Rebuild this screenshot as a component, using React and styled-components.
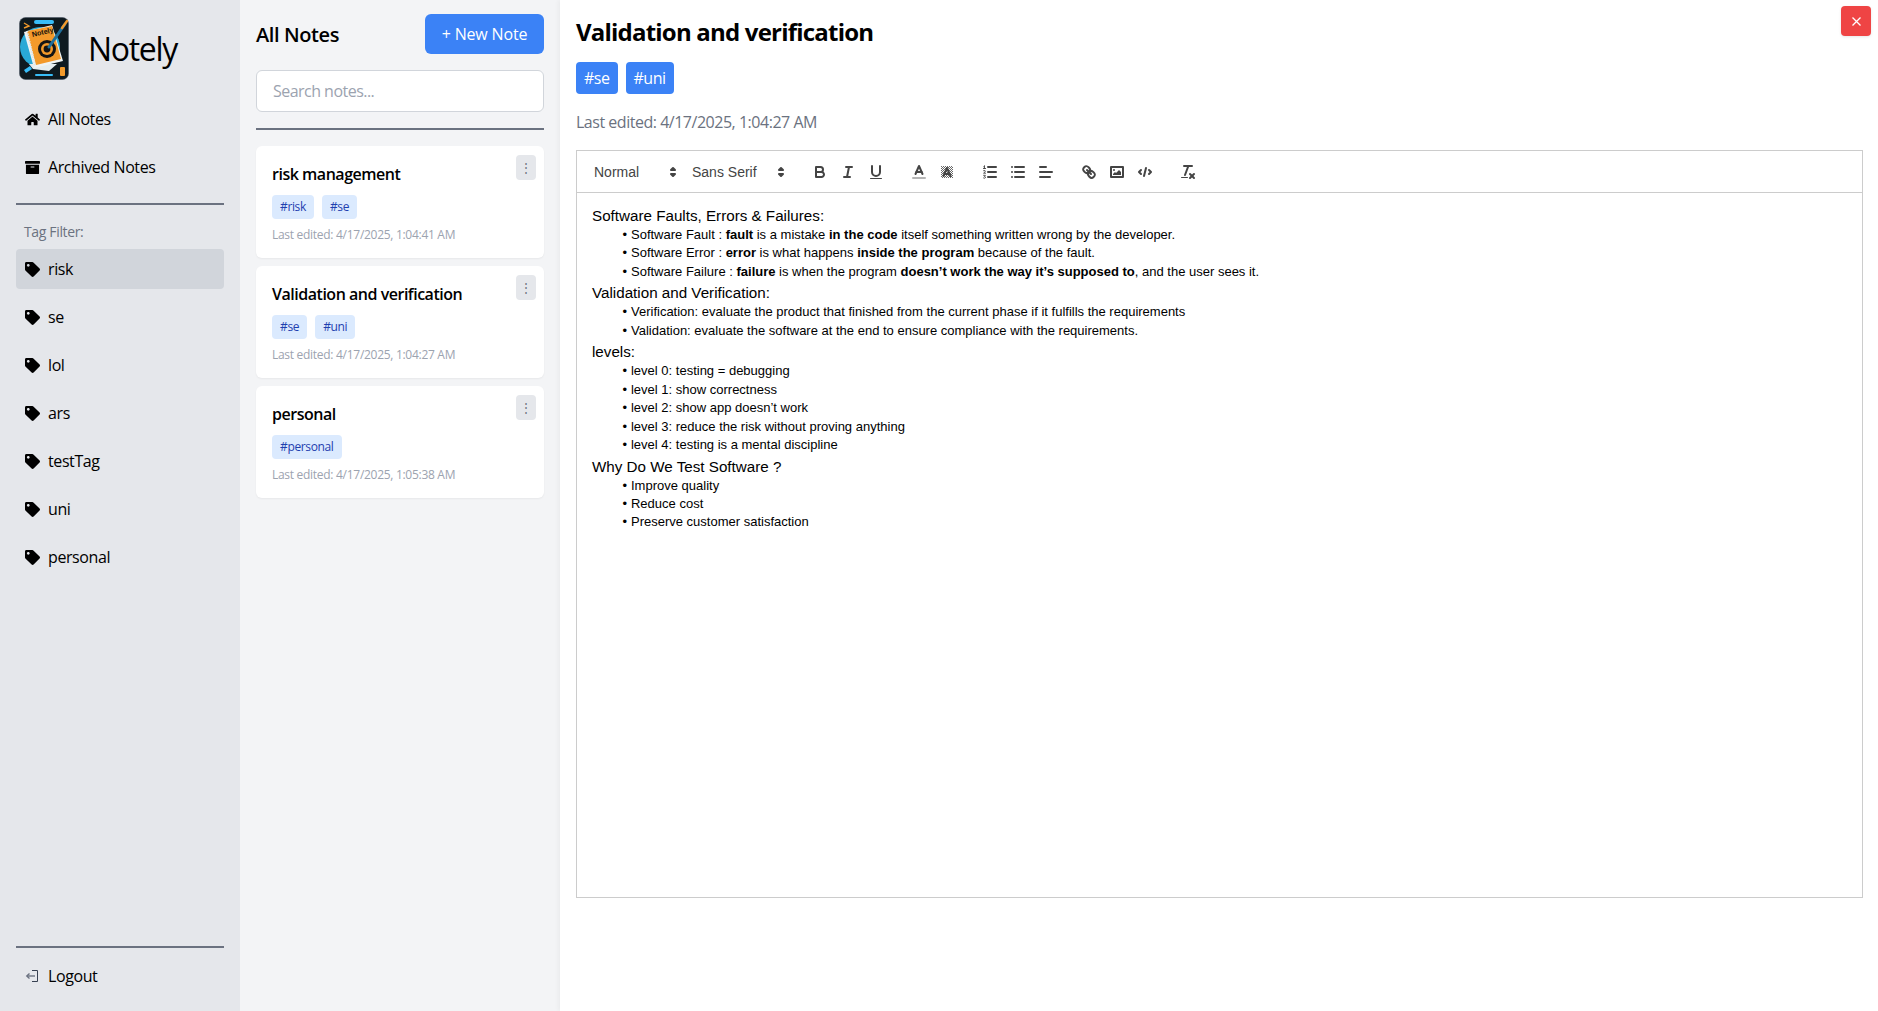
import React from 'react';
import styled, { createGlobalStyle } from 'styled-components';
import { FaHome, FaArchive, FaTag } from 'react-icons/fa';

const GlobalStyle = createGlobalStyle`
  * { box-sizing: border-box; }
  html, body { margin: 0; height: 100%; overflow: hidden; }
  body { font-family: "Open Sans", "Noto Sans", sans-serif; color: #000; background: #fff; }
`;

const tags = ['risk', 'se', 'lol', 'ars', 'testTag', 'uni', 'personal'];

const notes = [
  { title: 'risk management', tags: ['risk', 'se'], edited: '4/17/2025, 1:04:41 AM' },
  { title: 'Validation and verification', tags: ['se', 'uni'], edited: '4/17/2025, 1:04:27 AM' },
  { title: 'personal', tags: ['personal'], edited: '4/17/2025, 1:05:38 AM' },
];

function Logo() {
  return (
    <LogoMark viewBox="0 0 50 63" aria-hidden="true">
      <rect x="0.5" y="0.5" width="49" height="62" rx="6" fill="#0f1a20" stroke="#4b5563" strokeWidth="0.6" />
      <rect x="15" y="3" width="20" height="4" rx="2" fill="#38bdf8" />
      <circle cx="21" cy="30" r="20" fill="#29a9d6" />
      <path d="M10 47 L38 47 L30 54 L14 52 Z" fill="#e5edf0" />
      <path d="M5 15 L33 8 L44 44 L15 51 Z" fill="#f0f4f5" />
      <path d="M8 14 L33 9 L42 42 L17 48 Z" fill="#f39a2b" />
      <path d="M8 14 L16 49" stroke="#dfe6e8" strokeWidth="2.2" strokeDasharray="1.4 1.2" />
      <text x="13.5" y="20" fontSize="7.2" fontWeight="700" fill="#17120c" transform="rotate(-13 13.5 20)" fontFamily="Liberation Sans, sans-serif">Notely</text>
      <circle cx="28" cy="32" r="9" fill="#151515" />
      <circle cx="28" cy="32" r="6" fill="#f39a2b" />
      <circle cx="28" cy="32" r="3.4" fill="#151515" />
      <path d="M30 30 L46 7" stroke="#1f6f9c" strokeWidth="3" strokeLinecap="round" />
      <path d="M43 11 L48 4" stroke="#f39a2b" strokeWidth="2.4" strokeLinecap="round" />
      <rect x="41" y="50" width="5" height="9" rx="1" fill="#f39a2b" />
      <rect x="16" y="57" width="18" height="2" rx="1" fill="#38bdf8" />
      <path d="M5 53 L11 49 L13 52 L7 56 Z" fill="#38bdf8" />
      <path d="M5 6 L10 9 L5 11" stroke="#f39a2b" strokeWidth="1.4" fill="none" />
    </LogoMark>
  );
}

function LogoutIcon() {
  return (
    <svg width="14" height="14" viewBox="0 0 14 14" fill="none" stroke="#374151" strokeWidth="1" aria-hidden="true">
      <path d="M7 1.5 H12.5 V12.5 H7" />
      <path d="M10 7 H2" strokeWidth="1.4" stroke="#6b7280" />
      <path d="M4.5 4.5 L1.8 7 L4.5 9.5" strokeWidth="1.4" stroke="#6b7280" />
    </svg>
  );
}

function PickerArrows() {
  return (
    <PickerIcon viewBox="0 0 18 18" aria-hidden="true">
      <polygon points="7 11 9 13 11 11 7 11" />
      <polygon points="7 7 9 5 11 7 7 7" />
    </PickerIcon>
  );
}

// checker behind the "A" of the background colour button
const hatch = [];
for (let x = 3; x < 15; x++) {
  for (let y = 3; y < 15; y++) {
    if ((x + y) % 2 === 0) hatch.push([x, y]);
  }
}

const icons = {
  bold: (
    <>
      <path d="M5,4H9.5A2.5,2.5,0,0,1,12,6.5v0A2.5,2.5,0,0,1,9.5,9H5A0,0,0,0,1,5,9V4A0,0,0,0,1,5,4Z" />
      <path d="M5,9h5.5A2.5,2.5,0,0,1,13,11.5v0A2.5,2.5,0,0,1,10.5,14H5a0,0,0,0,1,0,0V9A0,0,0,0,1,5,9Z" />
    </>
  ),
  italic: (
    <>
      <line x1="7" x2="13" y1="4" y2="4" />
      <line x1="5" x2="11" y1="14" y2="14" />
      <line x1="8" x2="10" y1="14" y2="4" />
    </>
  ),
  underline: (
    <>
      <path d="M5,3V9a4.012,4.012,0,0,0,4,4H9a4.012,4.012,0,0,0,4-4V3" />
      <rect height="1" rx="0.5" ry="0.5" width="12" x="3" y="15" fill="#444" stroke="none" />
    </>
  ),
  color: (
    <>
      <line x1="3" x2="15" y1="15" y2="15" stroke="#b5b5b5" />
      <polyline points="5.5 11 9 3 12.5 11" />
      <line x1="11.63" x2="6.38" y1="9" y2="9" />
    </>
  ),
  background: (
    <>
      <g fill="#444" stroke="none" opacity="0.8">
        {hatch.map(([x, y]) => <rect key={`${x}-${y}`} x={x} y={y} width="1" height="1" />)}
      </g>
      <polyline points="5.5 13 9 5 12.5 13" />
      <line x1="11.63" x2="6.38" y1="11" y2="11" />
    </>
  ),
  ordered: (
    <>
      <line x1="7" x2="15" y1="4" y2="4" />
      <line x1="7" x2="15" y1="9" y2="9" />
      <line x1="7" x2="15" y1="14" y2="14" />
      <line x1="2.5" x2="4.5" y1="5.5" y2="5.5" strokeWidth="1" />
      <path d="M3.5,3V5.5 M2.7,3.6 L3.5,3" strokeWidth="0.9" />
      <path d="M2.6,7.6 Q4.4,6.9 4.4,8.1 Q4.4,8.8 2.6,10.2 H4.6" strokeWidth="0.9" />
      <path d="M2.6,12.3 H4.4 L3.4,13.5 Q4.7,13.6 4.5,14.6 Q4.2,15.7 2.6,15" strokeWidth="0.9" />
    </>
  ),
  bullet: (
    <>
      <line x1="6" x2="15" y1="4" y2="4" />
      <line x1="6" x2="15" y1="9" y2="9" />
      <line x1="6" x2="15" y1="14" y2="14" />
      <line x1="3" x2="3" y1="4" y2="4" />
      <line x1="3" x2="3" y1="9" y2="9" />
      <line x1="3" x2="3" y1="14" y2="14" />
    </>
  ),
  align: (
    <>
      <line x1="3" x2="15" y1="9" y2="9" />
      <line x1="3" x2="13" y1="14" y2="14" />
      <line x1="3" x2="9" y1="4" y2="4" />
    </>
  ),
  link: (
    <>
      <line x1="7" x2="11" y1="7" y2="11" />
      <path d="M8.9,4.577a3.476,3.476,0,0,1,.36,4.679A3.476,3.476,0,0,1,4.577,8.9C3.185,7.5,2.035,6.4,4.217,4.217S7.5,3.185,8.9,4.577Z" />
      <path d="M13.423,9.1a3.476,3.476,0,0,0-4.679-.36,3.476,3.476,0,0,0,.36,4.679c1.392,1.392,2.5,2.542,4.679.36S14.815,10.5,13.423,9.1Z" />
    </>
  ),
  image: (
    <>
      <rect height="10" width="12" x="3" y="4" />
      <circle cx="6" cy="7" r="1" fill="#444" stroke="none" />
      <polyline points="5 12 5 11 7 9 8 10 11 7 13 9 13 12 5 12" fill="#444" stroke="none" />
    </>
  ),
  code: (
    <>
      <polyline points="5 7 3 9 5 11" />
      <polyline points="13 7 15 9 13 11" />
      <line x1="10" x2="8" y1="5" y2="13" />
    </>
  ),
  clean: (
    <>
      <line x1="5" x2="13" y1="3" y2="3" />
      <line x1="6" x2="9.35" y1="12" y2="3" />
      <line x1="11" x2="15" y1="11" y2="15" />
      <line x1="15" x2="11" y1="11" y2="15" />
      <rect height="1" rx="0.5" ry="0.5" width="7" x="2" y="14" fill="#444" stroke="none" />
    </>
  ),
};

const toolGroups = [
  ['bold', 'italic', 'underline'],
  ['color', 'background'],
  ['ordered', 'bullet', 'align'],
  ['link', 'image', 'code'],
  ['clean'],
];

function App() {
  return (
    <Page>
      <GlobalStyle />
      <Sidebar>
        <Brand>
          <Logo />
          <BrandName>Notely</BrandName>
        </Brand>
        <NavItem><NavIcon><FaHome /></NavIcon>All Notes</NavItem>
        <NavItem><NavIcon><FaArchive /></NavIcon>Archived Notes</NavItem>
        <Rule />
        <FilterLabel>Tag Filter:</FilterLabel>
        {tags.map((tag) => (
          <NavItem key={tag} $active={tag === 'risk'}>
            <NavIcon><FaTag /></NavIcon>
            {tag}
          </NavItem>
        ))}
        <SidebarFoot>
          <Rule />
          <NavItem><NavIcon><LogoutIcon /></NavIcon>Logout</NavItem>
        </SidebarFoot>
      </Sidebar>

      <NoteList>
        <ListHead>
          <ListTitle>All Notes</ListTitle>
          <NewButton>+ New Note</NewButton>
        </ListHead>
        <Search placeholder="Search notes..." />
        <ListRule />
        {notes.map((note) => (
          <Card key={note.title}>
            <Kebab>⋮</Kebab>
            <CardTitle>{note.title}</CardTitle>
            <CardTags>
              {note.tags.map((tag) => <SmallTag key={tag}>#{tag}</SmallTag>)}
            </CardTags>
            <CardDate>Last edited: {note.edited}</CardDate>
          </Card>
        ))}
      </NoteList>

      <Main>
        <CloseButton aria-label="close">
          <svg width="9" height="9" viewBox="0 0 9 9" stroke="#fff" strokeWidth="1.3" aria-hidden="true">
            <path d="M0.5 0.5 L8.5 8.5 M8.5 0.5 L0.5 8.5" />
          </svg>
        </CloseButton>
        <NoteTitle>Validation and verification</NoteTitle>
        <NoteTags>
          <BigTag>#se</BigTag>
          <BigTag>#uni</BigTag>
        </NoteTags>
        <Edited>Last edited: 4/17/2025, 1:04:27 AM</Edited>
        <Toolbar>
          <ToolGroup>
            <Picker $width={98}>Normal<PickerArrows /></Picker>
            <Picker $width={108}>Sans Serif<PickerArrows /></Picker>
          </ToolGroup>
          {toolGroups.map((group) => (
            <ToolGroup key={group[0]}>
              {group.map((name) => (
                <ToolButton key={name} aria-label={name}>
                  <ToolIcon viewBox="0 0 18 18">{icons[name]}</ToolIcon>
                </ToolButton>
              ))}
            </ToolGroup>
          ))}
        </Toolbar>
        <Editor>
          <Heading>Software Faults, Errors &amp; Failures:</Heading>
          <Bullets>
            <li>Software Fault : <strong>fault</strong> is a mistake <strong>in the code</strong> itself something written wrong by the developer.</li>
            <li>Software Error : <strong>error</strong> is what happens <strong>inside the program</strong> because of the fault.</li>
            <li>Software Failure : <strong>failure</strong> is when the program <strong>doesn’t work the way it’s supposed to</strong>, and the user sees it.</li>
          </Bullets>
          <Heading>Validation and Verification:</Heading>
          <Bullets>
            <li>Verification: evaluate the product that finished from the current phase if it fulfills the requirements</li>
            <li>Validation: evaluate the software at the end to ensure compliance with the requirements.</li>
          </Bullets>
          <Heading>levels:</Heading>
          <Bullets>
            <li>level 0: testing = debugging</li>
            <li>level 1: show correctness</li>
            <li>level 2: show app doesn’t work</li>
            <li>level 3: reduce the risk without proving anything</li>
            <li>level 4: testing is a mental discipline</li>
          </Bullets>
          <Heading>Why Do We Test Software ?</Heading>
          <Bullets>
            <li>Improve quality</li>
            <li>Reduce cost</li>
            <li>Preserve customer satisfaction</li>
          </Bullets>
        </Editor>
      </Main>
    </Page>
  );
}

const Page = styled.div`
  display: flex;
  height: 100vh;
  overflow: hidden;
`;

const Sidebar = styled.aside`
  flex: 0 0 240px;
  display: flex;
  flex-direction: column;
  padding: 17px 16px 7px;
  background: #e5e7eb;
`;

const Brand = styled.div`
  display: flex;
  align-items: center;
  gap: 19px;
  padding-left: 3px;
  height: 63px;
  margin-bottom: 19px;
`;

const LogoMark = styled.svg`
  width: 50px;
  height: 63px;
  flex: none;
`;

const BrandName = styled.span`
  font-size: 32px;
  line-height: 40px;
  letter-spacing: -1.3px;
`;

const NavItem = styled.div`
  display: flex;
  align-items: center;
  gap: 8px;
  height: 40px;
  flex: none;
  margin-bottom: 8px;
  padding: 0 8px;
  font-size: 16px;
  letter-spacing: -0.025em;
  border-radius: 4px;
  background: ${(p) => (p.$active ? '#d1d5db' : 'transparent')};
`;

const NavIcon = styled.span`
  display: flex;
  align-items: center;
  justify-content: center;
  width: 16px;
  height: 16px;
  font-size: 15px;
`;

const Rule = styled.hr`
  width: 100%;
  height: 2px;
  flex: none;
  margin: 8px 0 0;
  border: 0;
  background: #6b7280;
`;

const FilterLabel = styled.div`
  margin: 17px 8px 7px;
  font-size: 14px;
  line-height: 20px;
  letter-spacing: -0.025em;
  color: #6b7280;
`;

const SidebarFoot = styled.div`
  margin-top: auto;
  display: flex;
  flex-direction: column;
  gap: 8px;

  ${Rule} {
    margin: 0;
  }
`;

const NoteList = styled.section`
  flex: 0 0 320px;
  padding: 14px 16px;
  background: #f3f4f6;
  display: flex;
  flex-direction: column;
`;

const ListHead = styled.div`
  display: flex;
  align-items: center;
  justify-content: space-between;
  margin-bottom: 16px;
`;

const ListTitle = styled.h2`
  margin: 0;
  font-size: 20px;
  font-weight: 600;
  letter-spacing: -0.02em;
`;

const NewButton = styled.button`
  width: 119px;
  height: 40px;
  border: 0;
  border-radius: 6px;
  background: #3b82f6;
  color: #fff;
  font: inherit;
  font-size: 16px;
  letter-spacing: -0.01em;
`;

const Search = styled.input`
  width: 100%;
  height: 42px;
  flex: none;
  padding: 0 16px;
  border: 1px solid #d1d5db;
  border-radius: 6px;
  background: #fff;
  font: inherit;
  font-size: 16px;
  letter-spacing: -0.033em;

  &::placeholder {
    color: #9ca3af;
  }
`;

const ListRule = styled(Rule)`
  margin: 16px 0;
`;

const Card = styled.article`
  position: relative;
  height: 112px;
  flex: none;
  margin-bottom: 8px;
  padding: 16px;
  border-radius: 6px;
  background: #fff;
  box-shadow: 0 1px 2px rgba(0, 0, 0, 0.05);
`;

const Kebab = styled.button`
  position: absolute;
  top: 9px;
  right: 8px;
  width: 20px;
  height: 25px;
  padding: 0;
  border: 0;
  border-radius: 4px;
  background: #e5e7eb;
  color: #6b7280;
  font-size: 12px;
`;

const CardTitle = styled.h3`
  margin: 0 0 9px;
  font-size: 16px;
  line-height: 24px;
  font-weight: 600;
  letter-spacing: -0.03em;
`;

const CardTags = styled.div`
  display: flex;
  gap: 8px;
  margin-bottom: 8px;
`;

const SmallTag = styled.span`
  height: 24px;
  padding: 0 8px;
  border-radius: 4px;
  background: #dbeafe;
  color: #1e40af;
  font-size: 12px;
  line-height: 24px;
  letter-spacing: -0.03em;
`;

const CardDate = styled.div`
  font-size: 12px;
  line-height: 16px;
  letter-spacing: -0.024em;
  color: #9ca3af;
`;

const Main = styled.main`
  position: relative;
  flex: 1;
  min-width: 0;
  padding: 16px 15px 0 16px;
  background: #fff;
  box-shadow: -2px 0 4px rgba(0, 0, 0, 0.04);
`;

const CloseButton = styled.button`
  position: absolute;
  top: 6px;
  right: 7px;
  display: flex;
  align-items: center;
  justify-content: center;
  width: 30px;
  height: 30px;
  padding: 0;
  border: 0;
  border-radius: 4px;
  background: #ef4444;
  box-shadow: 0 1px 3px rgba(0, 0, 0, 0.1);
`;

const NoteTitle = styled.h1`
  margin: 0 0 14px;
  font-size: 24px;
  line-height: 32px;
  font-weight: 700;
  letter-spacing: -0.033em;
`;

const NoteTags = styled.div`
  display: flex;
  gap: 8px;
  margin-bottom: 16px;
`;

const BigTag = styled.span`
  height: 32px;
  padding: 0 8px;
  border-radius: 4px;
  background: #3b82f6;
  color: #fff;
  font-size: 16px;
  line-height: 32px;
  letter-spacing: -0.03em;
`;

const Edited = styled.div`
  margin-bottom: 16px;
  font-size: 16px;
  line-height: 24px;
  letter-spacing: -0.03em;
  color: #6b7280;
`;

const Toolbar = styled.div`
  display: flex;
  height: 43px;
  padding: 9px 8px 8px;
  border: 1px solid #ccc;
`;

const ToolGroup = styled.span`
  display: flex;
  margin-right: 15px;
`;

const Picker = styled.span`
  position: relative;
  width: ${(p) => p.$width}px;
  height: 24px;
  padding-left: 9px;
  color: #444;
  font-family: "Liberation Sans", Arial, sans-serif;
  font-size: 14px;
  font-weight: 500;
  line-height: 24px;
`;

const PickerIcon = styled.svg`
  position: absolute;
  top: 3px;
  right: 1px;
  width: 18px;
  height: 18px;
  fill: #444;
  stroke: #444;
  stroke-width: 2;
  stroke-linejoin: round;
`;

const ToolButton = styled.button`
  width: 28px;
  height: 24px;
  padding: 3px 5px;
  border: 0;
  background: none;
`;

const ToolIcon = styled.svg`
  display: block;
  width: 18px;
  height: 18px;
  fill: none;
  stroke: #444;
  stroke-width: 2;
  stroke-linecap: round;
  stroke-linejoin: round;
`;

const Editor = styled.div`
  height: 705px;
  padding: 11px 15px;
  border: 1px solid #ccc;
  border-top: 0;
  font-family: "Liberation Sans", Arial, sans-serif;
  font-size: 13px;
  line-height: 1.42;
`;

const Heading = styled.p`
  margin: 0;
  padding-top: 2px;
  font-size: 15.2px;
  line-height: 20px;
`;

const Bullets = styled.ul`
  margin: 0;
  padding-left: 1.5em;
  list-style: none;

  li {
    padding-left: 1.5em;
  }

  li::before {
    content: '•';
    display: inline-block;
    width: 1.2em;
    margin-left: -1.5em;
    margin-right: 0.3em;
    text-align: right;
    white-space: nowrap;
  }
`;

export default App;
